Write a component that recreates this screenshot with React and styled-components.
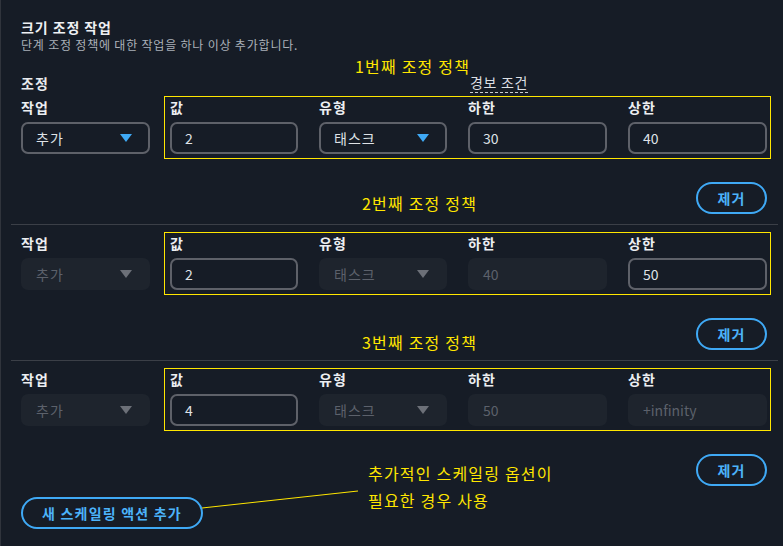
import React from "react";
import styled, { createGlobalStyle } from "styled-components";

const GlobalStyle = createGlobalStyle`
  html, body { margin: 0; padding: 0; background: #161c26; }
  body { font-family: "Noto Sans CJK KR", "Noto Sans", sans-serif; }
  * { box-sizing: border-box; }
`;

const YELLOW = "#ffe600";
const BLUE = "#3fa9f5";

const Page = styled.div`
  width: 783px;
  min-height: 546px;
  background: #161c26;
  border-left: 1px solid #30343c;
  padding: 17px 5px 14px 10px;
  position: relative;
  color: #e9ebee;
`;

const Header = styled.div`
  padding: 0 11px 0 10px;
`;

const Title = styled.h2`
  margin: 0;
  font-size: 14px;
  line-height: 20px;
  font-weight: 700;
  letter-spacing: 0.9px;
  color: #eef0f3;
`;

const Subtitle = styled.p`
  margin: 0;
  font-size: 12px;
  line-height: 16px;
  letter-spacing: 0.8px;
  color: #aab0b8;
`;

const Section = styled.section`
  padding: ${(p) => (p.$first ? "20px" : "7px")} 11px 0 10px;
  border-top: ${(p) => (p.$first ? "none" : "1px solid #3b3f47")};
  margin-top: ${(p) => (p.$first ? "0" : "10px")};
`;

const HeadingRow = styled.div`
  position: relative;
  display: grid;
  grid-template-columns: 449px 1fr;
  height: 20px;
  margin-bottom: 3px;
`;

const Heading = styled.div`
  font-size: 14px;
  line-height: 20px;
  font-weight: 700;
  letter-spacing: 1px;
`;

const AlarmLabel = styled.div`
  justify-self: start;
  font-size: 14px;
  line-height: 18px;
  letter-spacing: 0.7px;
  color: #dcdfe3;
  border-bottom: 1px dashed #c9ccd1;
`;

const Note = styled.div`
  position: absolute;
  left: ${(p) => p.$left}px;
  top: ${(p) => p.$top}px;
  color: ${YELLOW};
  font-size: 16px;
  letter-spacing: 1.2px;
  line-height: ${(p) => p.$lh || 20}px;
  white-space: nowrap;
  pointer-events: none;
`;

const Row = styled.div`
  display: flex;
  align-items: flex-start;
`;

const FirstField = styled.div`
  width: 129px;
  flex: none;
  padding-top: 1px;
`;

const Highlight = styled.div`
  flex: 1;
  margin-left: 14px;
  margin-right: -4px;
  border: 1px solid ${YELLOW};
  padding: 0 3px 4px 5px;
  display: grid;
  grid-template-columns: 128px 128px 1fr 1fr;
  column-gap: 21px;
`;

const Field = styled.div`
  display: flex;
  flex-direction: column;
`;

const Label = styled.div`
  font-size: 14px;
  line-height: 20px;
  font-weight: 700;
  letter-spacing: 1px;
  color: #eceef1;
  margin-bottom: 5px;
`;

const Control = styled.div`
  height: 32px;
  border-radius: 7px;
  border: 2px solid ${(p) => (p.$disabled ? "transparent" : "#5e6169")};
  background: ${(p) => (p.$disabled ? "#1e242d" : "#161c26")};
  color: ${(p) => (p.$disabled ? "#5c616b" : "#dfe2e6")};
  font-size: 14px;
  letter-spacing: ${(p) => (p.$korean ? "1px" : "0")};
  display: flex;
  align-items: center;
  justify-content: space-between;
  padding: 0 16px 0 13px;
`;

const Caret = styled.span`
  width: 0;
  height: 0;
  border-left: 6px solid transparent;
  border-right: 6px solid transparent;
  border-top: 8px solid ${(p) => (p.$disabled ? "#6c7078" : BLUE)};
`;

const Footer = styled.div`
  position: relative;
  display: flex;
  justify-content: flex-end;
  margin-top: 23px;
`;

const PillButton = styled.button`
  height: 32px;
  border-radius: 16px;
  border: 2px solid ${BLUE};
  background: transparent;
  color: #4cb3fa;
  font-family: inherit;
  font-size: 14px;
  font-weight: 700;
  letter-spacing: 1.2px;
  padding: 0;
  width: ${(p) => (p.$wide ? "182px" : "71px")};
  cursor: pointer;
`;

const BottomBar = styled.div`
  position: relative;
  margin-top: 11px;
  padding: 0 11px 0 10px;
`;

const Leader = styled.svg`
  position: absolute;
  left: 191px;
  top: -6px;
  overflow: visible;
`;

function Select({ value, disabled }) {
  return (
    <Control $disabled={disabled} $korean>
      <span>{value}</span>
      <Caret $disabled={disabled} />
    </Control>
  );
}

function Input({ value, disabled }) {
  return <Control $disabled={disabled}>{value}</Control>;
}

const policies = [
  { value: "2", lower: "30", upper: "40", disabled: false, note: "2번째 조정 정책", noteTop: 11 },
  { value: "2", lower: "40", upper: "50", disabled: true, note: "3번째 조정 정책", noteTop: 14 },
  { value: "4", lower: "50", upper: "+infinity", disabled: true, upperDisabled: true },
];

export default function App() {
  return (
    <>
      <GlobalStyle />
      <Page>
        <Header>
          <Title>크기 조정 작업</Title>
          <Subtitle>단계 조정 정책에 대한 작업을 하나 이상 추가합니다.</Subtitle>
        </Header>
        {policies.map((p, i) => (
          <Section key={i} $first={i === 0}>
            {i === 0 && (
              <HeadingRow>
                <Heading>조정</Heading>
                <AlarmLabel>경보 조건</AlarmLabel>
                <Note $left={334} $top={-17}>1번째 조정 정책</Note>
              </HeadingRow>
            )}
            <Row>
              <FirstField>
                <Label>작업</Label>
                <Select value="추가" disabled={p.disabled} />
              </FirstField>
              <Highlight>
                <Field>
                  <Label>값</Label>
                  <Input value={p.value} />
                </Field>
                <Field>
                  <Label>유형</Label>
                  <Select value="태스크" disabled={p.disabled} />
                </Field>
                <Field>
                  <Label>하한</Label>
                  <Input value={p.lower} disabled={p.disabled} />
                </Field>
                <Field>
                  <Label>상한</Label>
                  <Input value={p.upper} disabled={p.upperDisabled} />
                </Field>
              </Highlight>
            </Row>
            <Footer>
              {p.note && (
                <Note $left={341} $top={p.noteTop}>{p.note}</Note>
              )}
              <PillButton>제거</PillButton>
            </Footer>
          </Section>
        ))}
        <BottomBar>
          <PillButton $wide>새 스케일링 액션 추가</PillButton>
          <Leader width="158" height="18" viewBox="0 0 158 18">
            <line x1="0" y1="17" x2="156" y2="0" stroke={YELLOW} strokeWidth="1" />
          </Leader>
          <Note $left={357} $top={-37} $lh={27}>
            추가적인 스케일링 옵션이
            <br />
            필요한 경우 사용
          </Note>
        </BottomBar>
      </Page>
    </>
  );
}
